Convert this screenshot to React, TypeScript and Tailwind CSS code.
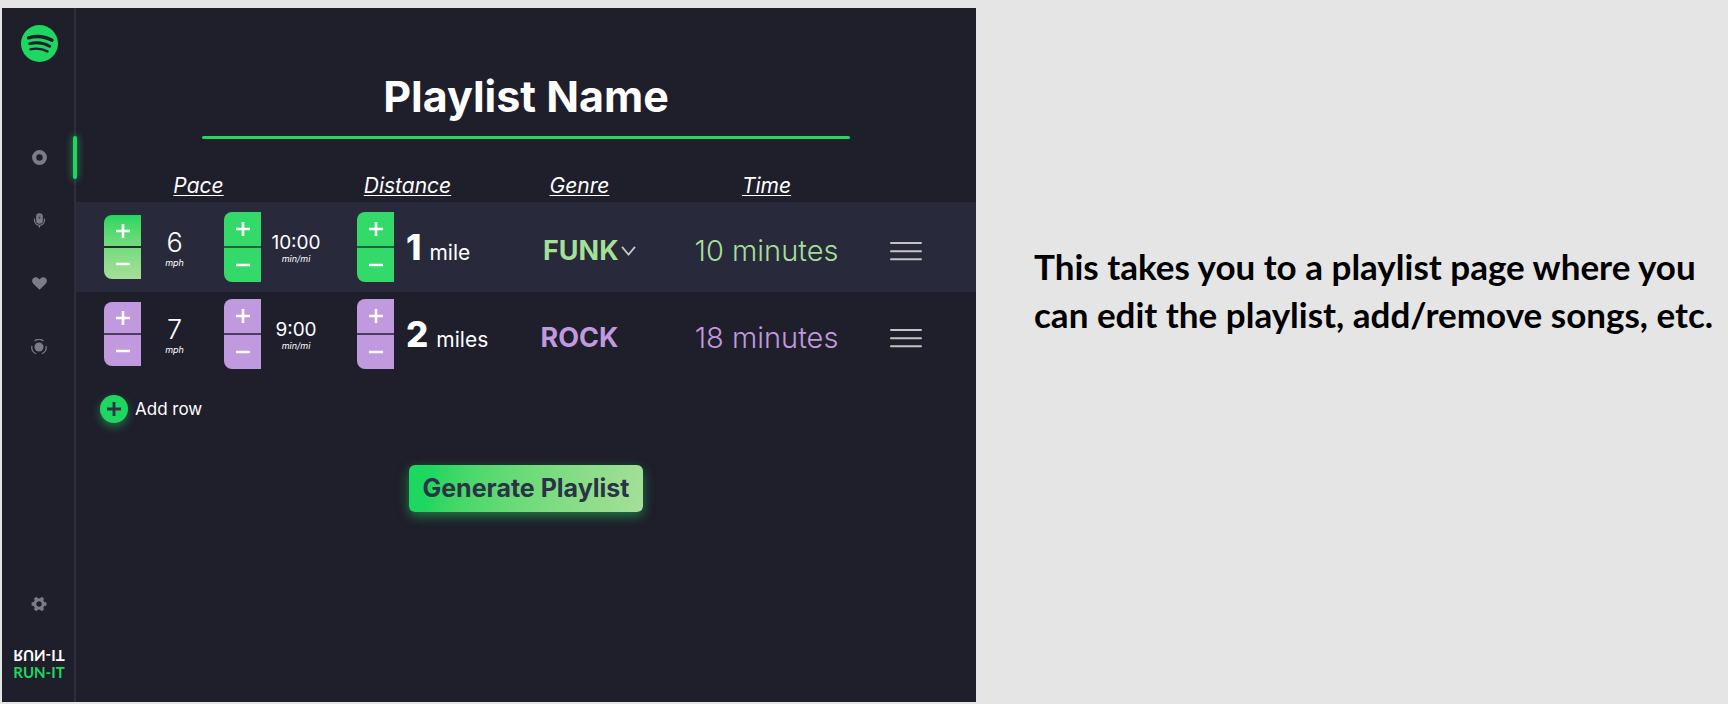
import React, { useState } from 'react';

type Tone = 'gradient' | 'green' | 'purple';

const toneBox: Record<Tone, string> = {
  gradient: 'h-16 bg-linear-to-b from-[#1ed760] to-[#a5df98]',
  green: 'h-[70px] bg-[#33da69]',
  purple: 'h-[70px] bg-[#c099df]',
};

const toneLine: Record<Tone, string> = {
  gradient: 'bg-[#28293b]',
  green: 'bg-[#22603f]',
  purple: 'bg-[#4a3f5c]',
};

function Stepper({ tone, label, short, onStep }: { tone: Tone; label: string; short?: boolean; onStep: (by: number) => void }) {
  return (
    <div className={`flex w-[37px] shrink-0 flex-col overflow-hidden rounded-l-lg ${toneBox[tone]} ${short ? 'max-h-16' : ''}`}>
      <button type="button" aria-label={`Increase ${label}`} onClick={() => onStep(1)} className="flex flex-1 items-center justify-center">
        <svg width="14" height="14" viewBox="0 0 14 14" stroke="#fff" strokeWidth="2.6">
          <path d="M0 7h14M7 0v14" />
        </svg>
      </button>
      <div className={`h-[2px] ${toneLine[tone]}`} />
      <button type="button" aria-label={`Decrease ${label}`} onClick={() => onStep(-1)} className="flex flex-1 items-center justify-center">
        <svg width="14" height="14" viewBox="0 0 14 14" stroke="#fff" strokeWidth="2.6">
          <path d="M0 7h14" />
        </svg>
      </button>
    </div>
  );
}

function Menu() {
  return (
    <button type="button" aria-label="Row menu" className="block pt-2">
      <svg width="32" height="20" viewBox="0 0 32 20" stroke="#c4c4c4" strokeWidth="2" strokeLinecap="round">
        <path d="M1 2h30M1 10.3h30M1 18.3h30" />
      </svg>
    </button>
  );
}

function PaceValue({ value, unit, large }: { value: string; unit: string; large?: boolean }) {
  return (
    <div className="flex flex-col items-center pt-1">
      <span className={large ? 'text-[27px] leading-7 font-light' : 'text-[19px] leading-5'}>{value}</span>
      <span className="text-[9px] leading-3 italic">{unit}</span>
    </div>
  );
}

function NavItem({ label, active, children }: { label: string; active?: boolean; children: React.ReactNode }) {
  return (
    <a href="#" aria-label={label} className="relative flex h-[63px] w-full items-center justify-center text-[#7d7c86]">
      {children}
      {active && <span className="absolute top-[10px] -right-[3px] h-[43px] w-1 rounded-full bg-[#1ed760] shadow-[0_0_7px_1px_rgba(30,215,96,0.5)]" />}
    </a>
  );
}

function Sidebar() {
  return (
    <aside className="flex w-[74px] shrink-0 flex-col items-center border-r-2 border-[#2e2d3b] pt-[17px] pb-[22px] pl-[2px]">
      <svg width="37" height="37" viewBox="0 0 37 37" fill="none" stroke="#1f1e2b" strokeLinecap="round">
        <circle cx="18.5" cy="18.5" r="18.5" fill="#1ed760" stroke="none" />
        <path d="M7.6 12.8C15 10.7 23.8 11.4 31 15.3" strokeWidth="3.4" />
        <path d="M8.7 18.7C15.2 17 22.5 17.7 28.7 21.2" strokeWidth="2.8" />
        <path d="M9.4 24.3C15 23 21.3 23.6 26.6 26.5" strokeWidth="2.3" />
      </svg>
      <nav className="mt-16 flex w-full flex-col">
        <NavItem label="Library" active>
          <svg width="15" height="15" viewBox="0 0 15 15" fill="none" stroke="currentColor" strokeWidth="4.2">
            <circle cx="7.5" cy="7.5" r="5.3" />
          </svg>
        </NavItem>
        <NavItem label="Podcasts">
          <svg width="15" height="15" viewBox="0 0 15 15" fill="none" stroke="currentColor">
            <rect x="4.2" y="0.3" width="6.6" height="10.4" rx="3.3" fill="currentColor" stroke="none" />
            <path d="M2.5 5.5v1.8a5 5 0 0 0 10 0V5.5M7.5 12.3v2.5" strokeWidth="1.2" />
            <path d="M6.2 3h2.6M6.2 5h2.6M7.5 4v2" stroke="#1f1e2b" strokeWidth="0.7" opacity="0.7" />
          </svg>
        </NavItem>
        <NavItem label="Favorites">
          <svg width="15" height="13" viewBox="0 0 15 13" fill="currentColor">
            <path d="M7.5 12.7 1.3 6.7C-.3 5-.3 2.6 1.2 1.2 2.8-.2 5.2-.1 6.6 1.4l.9 1 .9-1C9.8-.1 12.2-.2 13.8 1.2c1.500 1.400 1.500 3.800-.1 5.500z" />
          </svg>
        </NavItem>
        <NavItem label="Radio">
          <svg width="16" height="16" viewBox="0 0 16 16" fill="none" stroke="currentColor" strokeWidth="1.2">
            <circle cx="8" cy="8" r="4.5" fill="currentColor" stroke="none" />
            <path d="M3.6 1.9a7.4 7.4 0 0 1 8.8 0M.9 6.8a7.3 7.3 0 0 0 4.3 8M15.1 6.8a7.3 7.3 0 0 1-4.3 8" />
          </svg>
        </NavItem>
      </nav>
      <button type="button" aria-label="Settings" className="mt-auto mb-9 text-[#7d7c86]">
        <svg width="16" height="16" viewBox="0 0 16 16" fill="none" stroke="currentColor">
          <circle cx="8" cy="8" r="4.2" strokeWidth="3" />
          <path d="M13 8h2.400M10.500 12.330l1.200 2.080M5.500 12.330l-1.200 2.080M3 8H.6M5.500 3.670 4.300 1.590M10.500 3.670l1.200-2.080" strokeWidth="3.4" />
        </svg>
      </button>
      <div className="flex flex-col items-center font-[Lato,sans-serif] text-[15px] leading-4 font-bold">
        <span className="-scale-y-100 text-white">RUN-IT</span>
        <span className="text-[#1ed760]">RUN-IT</span>
      </div>
    </aside>
  );
}

export default function App() {
  const [rows, setRows] = useState([
    { mph: 6, miles: 1 },
    { mph: 7, miles: 2 },
  ]);
  const pace = (mph: number) => (mph === 7 ? '9:00' : `${Math.round(60 / mph)}:00`);
  const step = (row: number, key: 'mph' | 'miles', by: number) =>
    setRows(rows.map((r, i) => (i === row ? { ...r, [key]: Math.max(1, r[key] + by) } : r)));

  const minutes = (i: number) => rows[i].miles * parseInt(pace(rows[i].mph), 10);
  const tones: Tone[] = ['green', 'purple'];

  return (
    <div className="grid min-h-screen grid-cols-[minmax(0,974fr)_minmax(0,752fr)] bg-[#e5e5e5] pt-2 pb-[2px] pl-[2px] font-[Inter,sans-serif]">
      <div className="flex bg-[#1f1e2b] text-white">
        <Sidebar />
        <main className="flex min-w-0 flex-1 flex-col">
          <h1 className="pt-16 text-center text-[43px] leading-[48px] font-bold">Playlist Name</h1>
          <div className="mx-auto mt-4 h-[3px] w-[72%] rounded-full bg-[#1ed760]" />
          <table className="w-full table-fixed border-collapse">
            <thead>
              <tr className="h-[63px] align-bottom text-[21px] leading-6 italic underline decoration-1 underline-offset-2">
                <th scope="col" className="w-[29%] pr-4 pb-1 font-normal">Pace</th>
                <th scope="col" className="w-[17%] pr-3 pb-1 font-normal">Distance</th>
                <th scope="col" className="w-[19%] pb-1 pl-2 font-normal">Genre</th>
                <th scope="col" className="w-[23%] pb-1 pl-1 font-normal">Time</th>
                <td />
              </tr>
            </thead>
            <tbody>
              {rows.map((row, i) => (
                <tr key={i} className={i === 0 ? 'h-[90px] bg-[#28293b]' : 'h-[84px]'}>
                  <td>
                    <div className="flex items-center pl-7">
                      <Stepper tone={i === 0 ? 'gradient' : 'purple'} label="speed" short onStep={(by) => step(i, 'mph', by)} />
                      <div className="w-[83px] pr-4">
                        <PaceValue value={String(row.mph)} unit="mph" large />
                      </div>
                      <Stepper tone={tones[i]} label="pace" onStep={(by) => step(i, 'mph', -by)} />
                      <div className="w-[70px]">
                        <PaceValue value={pace(row.mph)} unit="min/mi" />
                      </div>
                    </div>
                  </td>
                  <td>
                    <div className="flex items-center pl-5">
                      <Stepper tone={tones[i]} label="distance" onStep={(by) => step(i, 'miles', by)} />
                      <div className="flex items-baseline gap-2 pl-3 whitespace-nowrap">
                        <span className="text-[35px] leading-10 font-extrabold">{row.miles}</span>
                        <span className="text-[21px] leading-6">{row.miles === 1 ? 'mile' : 'miles'}</span>
                      </div>
                    </div>
                  </td>
                  <td>
                    <div className="flex items-center justify-center pt-2 pl-2 text-[27px] leading-8 font-bold">
                      {i === 0 ? (
                        <div className="flex items-center gap-[2px] pl-5">
                          <select aria-label="Genre" defaultValue="FUNK" className="w-[76px] appearance-none text-[#a5df98] outline-none">
                            <option>FUNK</option>
                            <option>ROCK</option>
                          </select>
                          <svg width="15" height="10" viewBox="0 0 15 10" fill="none" stroke="#c4c4c4" strokeWidth="1.8">
                            <path d="m1 .8 6.500 7.700L14 .8" />
                          </svg>
                        </div>
                      ) : (
                        <span className="text-[#c099df]">ROCK</span>
                      )}
                    </div>
                  </td>
                  <td className={`pt-2 pl-1 text-center text-[29px] leading-8 font-light whitespace-nowrap ${i === 0 ? 'text-[#a5df98]' : 'text-[#c099df]'}`}>
                    {minutes(i)} minutes
                  </td>
                  <td className="pl-[22px]">
                    <Menu />
                  </td>
                </tr>
              ))}
            </tbody>
          </table>
          <button type="button" className="mt-[19px] ml-6 flex items-center gap-[7px] self-start">
            <span className="flex size-7 items-center justify-center rounded-full bg-[#1ed760] shadow-[0_4px_10px_rgba(30,215,96,0.45)]">
              <svg width="14" height="14" viewBox="0 0 14 14" stroke="#2c3347" strokeWidth="2.8">
                <path d="M0 7h14M7 0v14" />
              </svg>
            </span>
            <span className="text-[17px] leading-6">Add row</span>
          </button>
          <button
            type="button"
            className="mt-[42px] h-[47px] self-center rounded-md bg-linear-100 from-[#1ed760] from-10% to-[#a5df98] px-[13px] text-[25px] font-bold text-[#2c3347] shadow-[0_4px_12px_rgba(30,215,96,0.5)]"
          >
            Generate Playlist
          </button>
        </main>
      </div>
      <p className="pt-[234px] pl-[58px] font-[Lato,sans-serif] text-[35px] leading-[48px] font-bold whitespace-nowrap text-black">
        This takes you to a playlist page where you
        <br />
        can edit the playlist, add/remove songs, etc.
      </p>
    </div>
  );
}
